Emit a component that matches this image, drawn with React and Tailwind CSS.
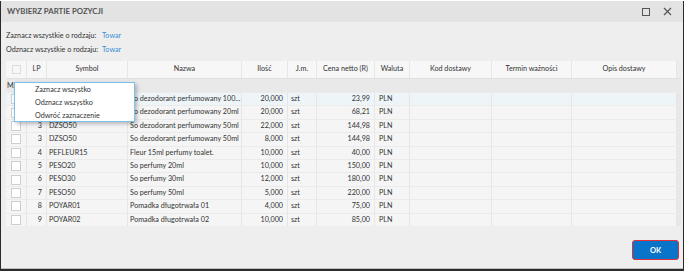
import React from 'react';

const cols = 'grid grid-cols-[21px_20px_81px_114px_46px_29px_58px_35px_82px_80px_105px_4px]';

const rows = [
  { lp: 1, sym: 'DZSO100', name: 'So dezodorant perfumowany 100...', qty: '20,000', price: '23,99', active: true },
  { lp: 2, sym: 'DZSO20', name: 'So dezodorant perfumowany 20ml', qty: '20,000', price: '68,21' },
  { lp: 3, sym: 'DZSO50', name: 'So dezodorant perfumowany 50ml', qty: '22,000', price: '144,98' },
  { lp: 3, sym: 'DZSO50', name: 'So dezodorant perfumowany 50ml', qty: '8,000', price: '144,98' },
  { lp: 4, sym: 'PEFLEUR15', name: 'Fleur 15ml perfumy toalet.', qty: '10,000', price: '40,00' },
  { lp: 5, sym: 'PESO20', name: 'So perfumy 20ml', qty: '10,000', price: '150,00' },
  { lp: 6, sym: 'PESO30', name: 'So perfumy 30ml', qty: '12,000', price: '180,00' },
  { lp: 7, sym: 'PESO50', name: 'So perfumy 50ml', qty: '5,000', price: '220,00' },
  { lp: 8, sym: 'POYAR01', name: 'Pomadka długotrwała 01', qty: '4,000', price: '75,00' },
  { lp: 9, sym: 'POYAR02', name: 'Pomadka długotrwała 02', qty: '10,000', price: '85,00' },
];

const headers = ['LP', 'Symbol', 'Nazwa', 'Ilość', 'J.m.', 'Cena netto (R)', 'Waluta', 'Kod dostawy', 'Termin ważności', 'Opis dostawy'];

function Check() {
  return <div className="w-[10px] h-[10px] bg-white border border-[#cfcfcf]" />;
}

export default function App() {
  const cell = 'border-r border-[#e6e6e6] overflow-hidden whitespace-nowrap';
  return (
    <div className="w-[684px] h-[271px] bg-[#2b2b2b] font-['Lato',sans-serif] text-[#333] text-[7.2px]">
      <div className="w-[682px] h-[268px] ml-px mt-px bg-[#eeeeee] flex flex-col relative">
        {/* title bar */}
        <div className="h-[21px] bg-[#e3e3e3] flex items-center px-[6px] shrink-0">
          <span className="font-bold text-[7.8px] text-[#555]">WYBIERZ PARTIE POZYCJI</span>
          <div className="ml-auto flex items-center gap-[13px] pr-[5px]">
            <div className="w-[8px] h-[8px] border-[1.5px] border-[#555]" />
            <svg width="9" height="9" viewBox="0 0 9 9"><path d="M1 1L8 8M8 1L1 8" stroke="#555" strokeWidth="1.2" /></svg>
          </div>
        </div>

        <div className="px-[5px] pt-[8px] flex flex-col gap-[3px] leading-[11px] whitespace-nowrap">
          <div className="flex"><span className="w-[96px]">Zaznacz wszystkie o rodzaju:</span><span className="text-[#3a8fd6]">Towar</span></div>
          <div className="flex"><span className="w-[96px]">Odznacz wszystkie o rodzaju:</span><span className="text-[#3a8fd6]">Towar</span></div>
        </div>

        {/* grid */}
        <div className="mx-[5px] mt-[6px] w-[675px] bg-[#f5f5f5]">
          <div className={`${cols} h-[18px] bg-[#f7f7f7] border-b border-[#e0e0e0] items-stretch`}>
            <div className={`${cell} flex items-center justify-center`}><div className="w-[9px] h-[9px] border border-[#dcdcdc] bg-[#f7f7f7]" /></div>
            {headers.map((h) => (
              <div key={h} className={`${cell} flex items-center justify-center text-[#333]`}>{h}</div>
            ))}
            <div className="bg-[#ececec]" />
          </div>
          <div className="h-[13px] bg-[#e9e9e9] flex items-center pl-px leading-none">Magazyn główny</div>
          {rows.map((r, i) => (
            <div key={i} className={`${cols} h-[13.4px] border-t border-[#ebebeb] leading-[12px] ${r.active ? 'bg-[#edf5f9]' : 'bg-[#f5f5f5]'}`}>
              <div className={`${cell} flex items-center justify-center`}><Check /></div>
              <div className={`${cell} text-right pr-[4px]`}>{r.lp}</div>
              <div className={`${cell} pl-[2px]`}>{r.sym}</div>
              <div className={`${cell} pl-[2px]`}>{r.name}</div>
              <div className={`${cell} text-right pr-[4px]`}>{r.qty}</div>
              <div className={`${cell} pl-[3px]`}>szt</div>
              <div className={`${cell} text-right pr-[4px]`}>{r.price}</div>
              <div className={`${cell} pl-[4px]`}>PLN</div>
              <div className={cell} />
              <div className={cell} />
              <div className={cell} />
              <div className="bg-[#e8e8e8]" />
            </div>
          ))}
        </div>

        <div className="flex-1 flex items-center justify-end pr-[4px]">
          <button className="w-[47px] h-[20px] rounded-[3px] border border-[#e0303a] bg-[#0a74c8] text-white font-bold text-[7.5px] mt-[7px]">OK</button>
        </div>
        <div className="h-px bg-[#bdbdbd]" />

        {/* context menu */}
        <div className="absolute left-[13px] top-[81px] w-[121px] h-[40px] bg-white border border-[#7cc0ea] shadow-[2px_2px_4px_rgba(0,0,0,0.25)] flex flex-col justify-center gap-[2px] pl-[20px] leading-[11px]">
          <span>Zaznacz wszystko</span>
          <span>Odznacz wszystko</span>
          <span>Odwróć zaznaczenie</span>
        </div>
      </div>
    </div>
  );
}
